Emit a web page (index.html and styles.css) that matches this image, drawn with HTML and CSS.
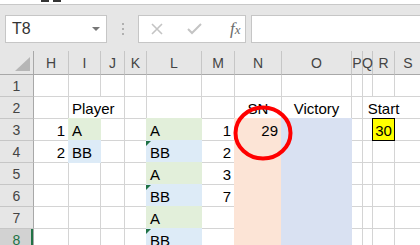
FILE: index.html
```html
<!DOCTYPE html>
<html lang="en">
<head>
    <meta charset="UTF-8">
    <title>Sheet</title>
    <link rel="stylesheet" href="styles.css">
</head>
<body>
    <div class="ribbon-edge">
        <span class="frag"></span><span class="frag"></span>
    </div>

    <div class="formula-bar">
        <div class="name-box">
            <span>T8</span>
            <span class="caret"></span>
        </div>
        <div class="grip">
            <i></i><i></i><i></i>
        </div>
        <div class="fx-buttons">
            <svg class="fx-icon" width="14" height="12" viewBox="0 0 14 12">
                <path d="M2 1 L12 11 M12 1 L2 11" stroke="#c4c4c4" stroke-width="1.6" fill="none"/>
            </svg>
            <svg class="fx-icon" width="15" height="12" viewBox="0 0 15 12">
                <path d="M1 6 L5 10 L14 1" stroke="#c4c4c4" stroke-width="2" fill="none"/>
            </svg>
            <span class="fx"><i>f</i><i class="x">x</i></span>
        </div>
        <div class="formula-input"></div>
    </div>

    <div class="sheet">
        <!-- header row -->
        <div class="hdr corner">
            <svg width="16" height="15" viewBox="0 0 16 15"><polygon points="15,0 15,14 0,14" fill="#b6b6b6"/></svg>
        </div>
        <div class="hdr">H</div>
        <div class="hdr">I</div>
        <div class="hdr">J</div>
        <div class="hdr">K</div>
        <div class="hdr">L</div>
        <div class="hdr">M</div>
        <div class="hdr">N</div>
        <div class="hdr">O</div>
        <div class="hdr">P</div>
        <div class="hdr">Q</div>
        <div class="hdr">R</div>
        <div class="hdr">S</div>

        <!-- row 1 -->
        <div class="rh">1</div>
        <div class="c"></div><div class="c"></div><div class="c"></div><div class="c"></div>
        <div class="c"></div><div class="c"></div><div class="c"></div><div class="c"></div>
        <div class="c"></div><div class="c"></div><div class="c"></div><div class="c"></div>

        <!-- row 2 -->
        <div class="rh">2</div>
        <div class="c"></div>
        <div class="c spill">Player</div>
        <div class="c"></div><div class="c"></div><div class="c"></div><div class="c"></div>
        <div class="c mid">SN</div>
        <div class="c mid">Victory</div>
        <div class="c"></div>
        <div class="c spill"></div>
        <div class="c mid spill">Start</div>
        <div class="c"></div>

        <!-- row 3 -->
        <div class="rh">3</div>
        <div class="c num">1</div>
        <div class="c green">A</div>
        <div class="c"></div><div class="c"></div>
        <div class="c green">A</div>
        <div class="c num">1</div>
        <div class="c peach num">29</div>
        <div class="c lav"></div>
        <div class="c"></div><div class="c"></div>
        <div class="c start">30</div>
        <div class="c"></div>

        <!-- row 4 -->
        <div class="rh">4</div>
        <div class="c num">2</div>
        <div class="c blue">BB</div>
        <div class="c"></div><div class="c"></div>
        <div class="c blue flag">BB</div>
        <div class="c num">2</div>
        <div class="c peach"></div>
        <div class="c lav"></div>
        <div class="c"></div><div class="c"></div><div class="c"></div><div class="c"></div>

        <!-- row 5 -->
        <div class="rh">5</div>
        <div class="c"></div><div class="c"></div><div class="c"></div><div class="c"></div>
        <div class="c green">A</div>
        <div class="c num">3</div>
        <div class="c peach"></div>
        <div class="c lav"></div>
        <div class="c"></div><div class="c"></div><div class="c"></div><div class="c"></div>

        <!-- row 6 -->
        <div class="rh">6</div>
        <div class="c"></div><div class="c"></div><div class="c"></div><div class="c"></div>
        <div class="c blue flag">BB</div>
        <div class="c num">7</div>
        <div class="c peach"></div>
        <div class="c lav"></div>
        <div class="c"></div><div class="c"></div><div class="c"></div><div class="c"></div>

        <!-- row 7 -->
        <div class="rh">7</div>
        <div class="c"></div><div class="c"></div><div class="c"></div><div class="c"></div>
        <div class="c green">A</div>
        <div class="c"></div>
        <div class="c peach"></div>
        <div class="c lav"></div>
        <div class="c"></div><div class="c"></div><div class="c"></div><div class="c"></div>

        <!-- row 8 -->
        <div class="rh active">8</div>
        <div class="c"></div><div class="c"></div><div class="c"></div><div class="c"></div>
        <div class="c blue flag">BB</div>
        <div class="c"></div>
        <div class="c peach"></div>
        <div class="c lav"></div>
        <div class="c"></div><div class="c"></div><div class="c"></div><div class="c"></div>

        <svg class="ring" width="60" height="56" viewBox="0 0 60 56">
            <ellipse cx="30" cy="28" rx="27.5" ry="25.5" stroke="#ff0000" stroke-width="4" fill="none"/>
        </svg>
    </div>
</body>
</html>
```

FILE: styles.css
```css
body {
    margin: 0;
    width: 420px;
    height: 245px;
    overflow: hidden;
    background: #e6e6e6;
    font-family: "Liberation Sans", Arial, sans-serif;
}
.ribbon-edge {
    height: 4px;
    background: #fff;
    border-bottom: 1px solid #c8c8c8;
    position: relative;
}
.frag {
    display: inline-block;
    width: 8px;
    height: 2px;
    background: #333;
    margin-left: 41px;
    vertical-align: top;
}
.frag + .frag {
    margin-left: 4px;
}
.formula-bar {
    height: 46px;
    display: flex;
    align-items: flex-start;
    padding: 10px 0 0 5px;
    box-sizing: border-box;
}
.name-box, .fx-buttons, .formula-input {
    height: 28px;
    background: #fff;
    border: 1px solid #c6c6c6;
    box-sizing: border-box;
}
.name-box {
    width: 102px;
    display: flex;
    align-items: center;
    justify-content: space-between;
    padding: 0 6px 0 6px;
    font-size: 16px;
    color: #333;
}
.caret {
    width: 0;
    height: 0;
    border-left: 4px solid transparent;
    border-right: 4px solid transparent;
    border-top: 4px solid #777;
}
.grip {
    width: 31px;
    height: 28px;
    display: flex;
    flex-direction: column;
    align-items: center;
    justify-content: center;
    gap: 3px;
}
.grip i {
    width: 2px;
    height: 2px;
    background: #b0b0b0;
}
.fx-buttons {
    width: 108px;
    display: flex;
    align-items: center;
    padding-left: 11px;
}
.fx-icon {
    margin-right: 23px;
}
.fx-icon + .fx-icon {
    margin-right: 28px;
}
.fx {
    font-family: "Liberation Serif", serif;
    font-size: 17px;
    color: #6b6b6b;
}
.fx .x {
    font-size: 13px;
}
.formula-input {
    flex: 1;
    margin-left: 5px;
    margin-right: -10px;
}
.sheet {
    position: relative;
    display: grid;
    grid-template-columns: 34px 35px 32px 24px 22px 55px 33px 47px 70px 11px 10px 22px 27px;
    grid-template-rows: 24px repeat(8, 22px);
    background: #fff;
}
.sheet > div {
    box-sizing: border-box;
    border-right: 1px solid #d4d4d4;
    border-bottom: 1px solid #d4d4d4;
}
.sheet > .hdr {
    background: #e6e6e6;
    border-right-color: #c6c6c6;
    border-bottom-color: #a8a8a8;
    font-size: 14px;
    color: #444;
    display: flex;
    align-items: center;
    justify-content: center;
}
.sheet > .corner {
    border-right-color: #a8a8a8;
    justify-content: flex-end;
    align-items: flex-end;
    padding: 0 2px 2px 0;
}
.sheet > .rh {
    background: #e6e6e6;
    border-right-color: #a8a8a8;
    border-bottom-color: #c6c6c6;
    font-size: 14px;
    color: #444;
    display: flex;
    align-items: center;
    justify-content: center;
}
.sheet > .rh.active {
    background: #d2d2d2;
    color: #217346;
    box-shadow: inset -2px 0 0 #217346;
}
.c {
    position: relative;
    display: flex;
    align-items: flex-end;
    padding: 0 3px;
    font-size: 15px;
    line-height: 18px;
    white-space: nowrap;
    color: #000;
}
.num {
    justify-content: flex-end;
}
.mid {
    justify-content: center;
}
.sheet > .spill {
    border-right-color: transparent;
}
.sheet > .green {
    background: #e2efda;
    border-color: #e2efda;
    box-shadow: -1px 0 0 #e2efda, 0 -1px 0 #e2efda, -1px -1px 0 #e2efda;
}
.sheet > .blue {
    background: #ddebf7;
    border-color: #ddebf7;
    box-shadow: -1px 0 0 #ddebf7, 0 -1px 0 #ddebf7, -1px -1px 0 #ddebf7;
}
.sheet > .peach {
    background: #fce4d6;
    border-color: #fce4d6;
    box-shadow: -1px 0 0 #fce4d6, 0 -1px 0 #fce4d6, -1px -1px 0 #fce4d6;
}
.sheet > .lav {
    background: #d9e1f2;
    border-color: #d9e1f2;
    box-shadow: -1px 0 0 #d9e1f2, 0 -1px 0 #d9e1f2, -1px -1px 0 #d9e1f2;
}
.sheet > .start {
    background: #ffff00;
    border-color: #000;
    box-shadow: -1px 0 0 #000, 0 -1px 0 #000, -1px -1px 0 #000;
    justify-content: center;
}
.flag::before {
    content: "";
    position: absolute;
    left: -1px;
    top: 0;
    border-top: 5px solid #1e7145;
    border-right: 5px solid transparent;
}
.ring {
    position: absolute;
    left: 233px;
    top: 54px;
}
```
